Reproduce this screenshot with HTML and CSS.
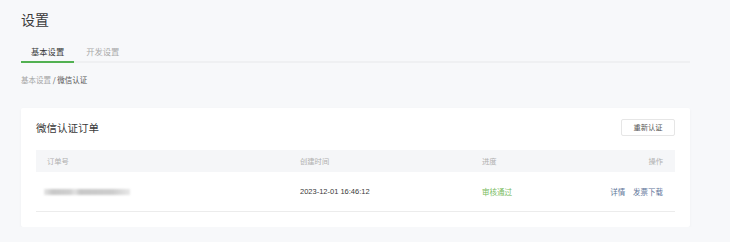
FILE: index.html
```html
<!DOCTYPE html>
<html lang="zh-CN">
<head>
    <meta charset="UTF-8">
    <meta name="viewport" content="width=device-width, initial-scale=1.0">
    <title>设置</title>
    <link rel="stylesheet" href="styles.css">
</head>
<body>
    <div class="page">
        <h1 class="title">设置</h1>
        <div class="tabs">
            <div class="tab active">基本设置</div>
            <div class="tab">开发设置</div>
        </div>
        <div class="breadcrumb">
            <span class="crumb-link">基本设置</span>
            <span class="crumb-current">/ 微信认证</span>
        </div>

        <div class="card">
            <div class="card-header">
                <h2 class="card-title">微信认证订单</h2>
                <button class="btn">重新认证</button>
            </div>
            <div class="table">
                <div class="row head">
                    <div>订单号</div>
                    <div>创建时间</div>
                    <div>进度</div>
                    <div class="ops">操作</div>
                </div>
                <div class="row body">
                    <div><span class="masked"></span></div>
                    <div class="date">2023-12-01 16:46:12</div>
                    <div class="status">审核通过</div>
                    <div class="ops">
                        <a class="link">详情</a>
                        <a class="link">发票下载</a>
                    </div>
                </div>
            </div>
        </div>
    </div>
</body>
</html>
```

FILE: styles.css
```css
body {
    margin: 0;
    background-color: #f7f8fa;
    font-family: "Noto Sans CJK SC", "Liberation Sans", sans-serif;
    color: #333;
}
.page {
    width: 669px;
    padding: 9px 0 0 21px;
}
.title {
    margin: 0;
    font-size: 14px;
    line-height: 20px;
    font-weight: 400;
    color: #3a3a3a;
}
.tabs {
    display: flex;
    border-bottom: 2px solid #eff0f2;
}
.tab {
    padding: 12px 10px 0;
    margin-right: 2px;
    margin-bottom: -2px;
    font-size: 8.3px;
    line-height: 20px;
    height: 20px;
    color: #aaa;
    border-bottom: 2px solid transparent;
}
.tab.active {
    color: #3a3a3a;
    border-bottom-color: #52b152;
}
.breadcrumb {
    margin-top: 10px;
    font-size: 7.5px;
    line-height: 14px;
}
.crumb-link {
    color: #a5a5a5;
}
.crumb-current {
    color: #555;
}
.card {
    margin-top: 21px;
    background-color: #ffffff;
    border-radius: 2px;
    box-shadow: 0 1px 3px rgba(0, 0, 0, 0.04);
    padding: 0 15px 15px;
}
.card-header {
    display: flex;
    justify-content: space-between;
    align-items: center;
    height: 38px;
}
.card-title {
    margin: 0;
    font-size: 10.5px;
    font-weight: 400;
    color: #3a3a3a;
}
.btn {
    height: 17px;
    width: 54px;
    padding: 0;
    border: 1px solid #e6e6e6;
    border-radius: 2px;
    background-color: #fff;
    font-family: inherit;
    font-size: 7.3px;
    color: #555;
}
.table {
    margin-top: 4px;
}
.row {
    display: grid;
    grid-template-columns: 253px 182px 1fr auto;
    align-items: center;
    padding: 0 12px 0 11px;
}
.row.head {
    height: 22px;
    background-color: #f5f6f8;
    font-size: 7.3px;
    color: #b0b0b0;
}
.row.body {
    height: 39px;
    border-bottom: 1px solid #ececec;
    font-size: 7.5px;
}
.masked {
    display: block;
    width: 86px;
    height: 6px;
    margin-left: -3px;
    background: linear-gradient(90deg, #e6e6e6 0%, #c8c8c8 10%, #cfcfcf 30%, #e2e2e2 36%, #c8c8c8 42%, #cdcdcd 80%, #e8e8e8 100%);
    filter: blur(1px);
}
.date {
    font-family: "Liberation Sans", sans-serif;
    font-size: 7.5px;
    color: #3a3a3a;
}
.status {
    color: #78bb5e;
}
.ops {
    text-align: right;
}
.link {
    color: #62769a;
    margin-left: 6px;
}
```
